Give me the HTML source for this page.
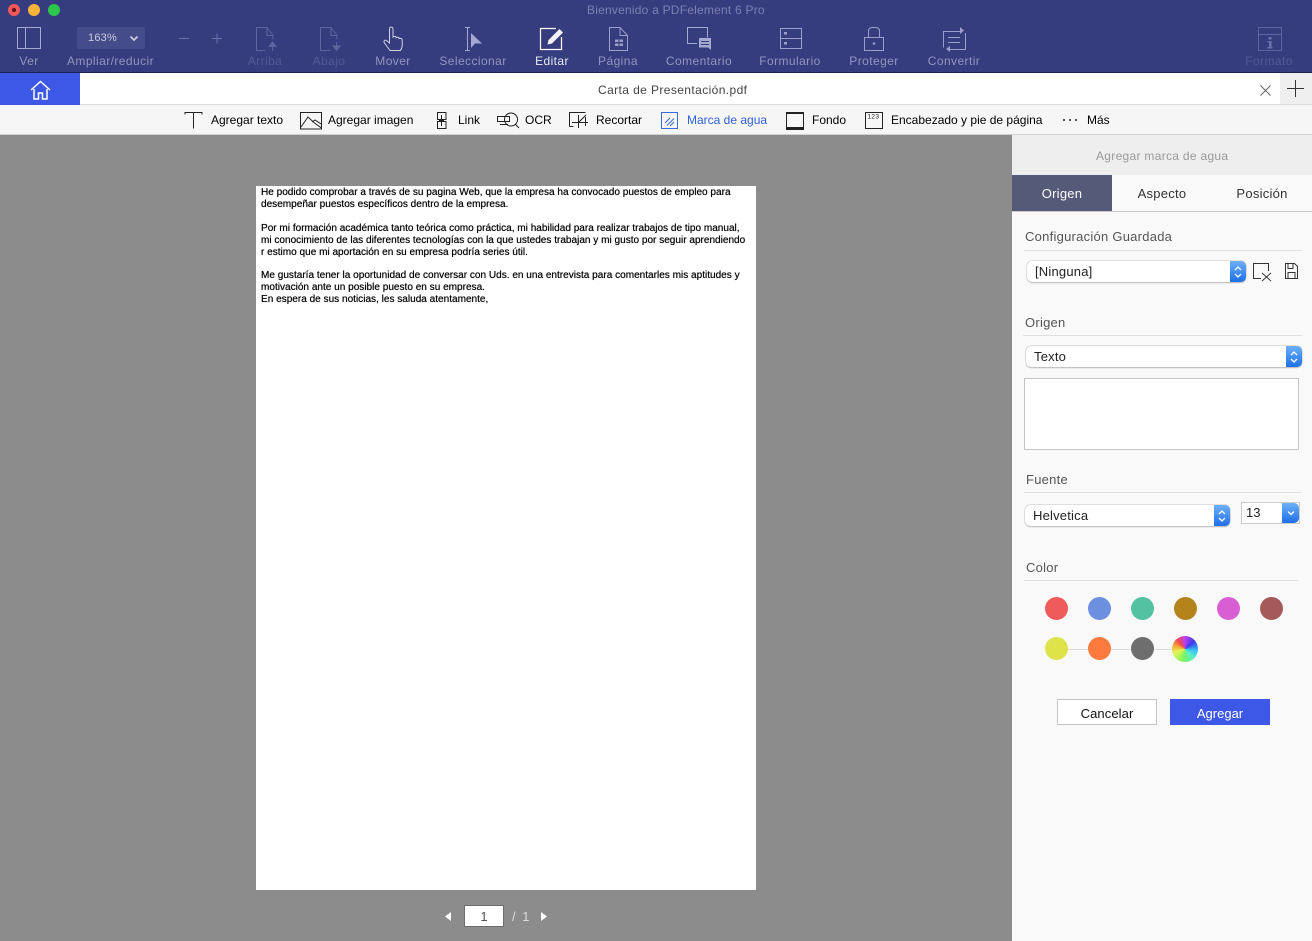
<!DOCTYPE html>
<html><head><meta charset="utf-8">
<style>
html,body{margin:0;padding:0}
body{width:1312px;height:941px;overflow:hidden;position:relative;background:#8c8c8c;font-family:"Liberation Sans",sans-serif}
.a{position:absolute}
.t{position:absolute;white-space:nowrap;line-height:14px}
.l{font-size:12px;letter-spacing:.42px;color:#9296bf;text-align:center;top:54px;transform:translateX(-50%)}
.d{color:#525a94}
.b{font-size:12px;color:#000;top:113px}
.h{font-size:13px;color:#555;letter-spacing:.25px}
.sel{position:absolute;background:#fff;border-radius:5px;box-shadow:0 0 0 .5px #c4c4c4,0 1px 1px #aaa;font-size:13px;color:#222;line-height:21px;box-sizing:border-box;padding-left:8px;height:21px;letter-spacing:.2px}
.arr{position:absolute;right:0;top:0;width:16px;height:21px;background:linear-gradient(#6cb0f8,#1f6fe8);border-radius:0 5px 5px 0}
.c{position:absolute;width:23px;height:23px;border-radius:50%}
.rule{position:absolute;height:1px;background:#e0e0e0}
svg{position:absolute;overflow:visible}
</style></head><body>
<div class="a" style="left:0;top:0;width:1312px;height:72px;background:#353d7e;border-bottom:1px solid #1c2350"></div>
<div class="c" style="left:8px;top:4px;width:12px;height:12px;background:#f2575a"></div>
<div class="c" style="left:12px;top:8px;width:4px;height:4px;background:#5a1015"></div>
<div class="c" style="left:28px;top:4px;width:12px;height:12px;background:#fbb43a"></div>
<div class="c" style="left:48px;top:4px;width:12px;height:12px;background:#2dc84a"></div>
<div class="t" style="left:587px;top:3px;font-size:12px;letter-spacing:.22px;color:#7c81b2">Bienvenido a PDFelement 6 Pro</div>

<svg style="left:0;top:0" width="1312" height="72" fill="none" stroke-width="1">
<g stroke="#a5a9d0"><rect x="17.500" y="27.500" width="23" height="21"/><path d="M25.500 27.500v21"/></g>
<path d="M179 38.500h10M212 38.500h10M217 33.500v10" stroke="#6b72a8"/>
<g stroke="#5d659f"><path d="M267 27.500h-10.500v23h9M267 27.500l6 8v4M267 27.500v8h6"/><path d="M272.500 45v6"/><path d="M269 46.500l3.500-4.500 3.500 4.500z" fill="#5d659f"/>
<path d="M331 27.500h-10.500v23h10M331 27.500l6 8v4M331 27.500v8h6"/><path d="M336.500 42v5"/><path d="M333 46l3.500 4.500 3.500-4.500z" fill="#5d659f"/></g>
<path d="M390 50.500l-5.500-7.500c-1.500-2 .5-3.500 2-2.500l3 2.500V29c0-2.500 3.500-2.500 3.500 0v8c1-1 3-1 3.200.8 1-1 3-.8 3 .8 1-.6 3-.2 3 1.400v5c0 2-.7 4-1.700 5.500z" stroke="#cfd1e6"/>
<g stroke="#a5a9d0"><path d="M465 27.500h5M465 50.500h5M467.500 27.500v23"/></g><path d="M471 33l11 10.500h-7L471 48z" fill="#a5a9d0"/>
<path d="M556 28.500H540.500v21h21V37" stroke="#fff" stroke-width="1.200"/><path d="M547.500 44.500l1-4.500 11-11 3.500 3.500-11 11z" fill="#f2f2f8"/>
<g stroke="#9a9ec8"><path d="M620 27.500h-10.500v23h18V35.500zM620 27.500v8h7.500"/></g><path d="M615 39.500h3.500v2.500H615zM619.500 39.500h3.500v2.500h-3.500zM615 43.500h3.500v2.500H615zM619.500 43.500h3.500v2.500h-3.500z" fill="#9a9ec8"/>
<path d="M697 43.500h-9.500v-16h20v10" stroke="#a5a9d0"/><path d="M699 38h12v12l-3-2.500h-9z" fill="#a5a9d0"/><path d="M701 41.500h8M701 44.500h8" stroke="#353d7e"/>
<g stroke="#9a9ec8"><rect x="780.500" y="28.500" width="21" height="20"/><path d="M780.500 38.500h21"/></g><path d="M784 32h3v2.500h-3zM784 42h3v2.500h-3z" fill="#9a9ec8"/>
<g stroke="#9a9ec8"><rect x="864.500" y="37.500" width="19" height="13"/><path d="M868.500 37v-6c0-3 2-3.500 4-3.500h3c2 0 4 .5 4 3.500v6"/></g><circle cx="874" cy="43.500" r="1.300" fill="#9a9ec8"/>
<g stroke="#9a9ec8"><path d="M960 31.500h-16.500v16M948 37.500h12M948 42.500h12M965.500 33v16.500H949"/></g><path d="M960 27l4 3.500-4 3.500zM950 46l-4 3 4 3z" fill="#9a9ec8"/>
<g stroke="#5d659f"><rect x="1258.500" y="27.500" width="23" height="23"/><path d="M1258.500 34.500h23"/></g><path d="M1268.500 37h3v2.500h-3zM1267.500 41h4v6h1v1.500h-5V47h1.500v-4.500h-1.500z" fill="#6a72aa"/>
</svg>

<div class="a" style="left:77px;top:27px;width:68px;height:22px;background:#454c8a;border-radius:2px"></div>
<div class="t" style="left:88px;top:31px;font-size:11px;letter-spacing:.2px;color:#c8cae0">163%</div>
<svg style="left:130px;top:35.500px" width="10" height="6" fill="none"><path d="M.5.500 4 4 7.500.500" stroke="#c8cae0" stroke-width="1.800"/></svg>

<div class="t l" style="left:29px">Ver</div>
<div class="t l" style="left:110.500px">Ampliar/reducir</div>
<div class="t l d" style="left:265px">Arriba</div>
<div class="t l d" style="left:329px">Abajo</div>
<div class="t l" style="left:393px">Mover</div>
<div class="t l" style="left:473px">Seleccionar</div>
<div class="t l" style="left:552px;color:#e8e9f2">Editar</div>
<div class="t l" style="left:618px">Página</div>
<div class="t l" style="left:699px">Comentario</div>
<div class="t l" style="left:790px">Formulario</div>
<div class="t l" style="left:874px">Proteger</div>
<div class="t l" style="left:954px">Convertir</div>
<div class="t l d" style="left:1269px">Formato</div>

<!-- tab bar -->
<div class="a" style="left:0;top:73px;width:1312px;height:31px;background:#fff"></div>
<div class="t" style="left:598px;top:83px;font-size:12px;letter-spacing:.4px;color:#444">Carta de Presentación.pdf</div>
<svg style="left:1260px;top:84.500px" width="11" height="11" fill="none" stroke="#666"><path d="M.5.500l10 10M10.500.500l-10 10"/></svg>
<div class="a" style="left:1280px;top:73px;width:32px;height:31px;background:#efefef"></div>
<svg style="left:1287px;top:80px" width="18" height="18" fill="none" stroke="#333"><path d="M0 8.500h17M8.500 0v17"/></svg>

<!-- sub toolbar -->
<div class="a" style="left:0;top:104px;width:1312px;height:31px;box-sizing:border-box;background:#f6f6f6;border-top:1px solid #dcdcdc;border-bottom:1px solid #d0d0d0"></div>
<div class="a" style="left:0;top:73px;width:80px;height:32px;background:#3d57e6"></div>
<svg style="left:30px;top:80px" width="21" height="20" fill="none" stroke="#fff" stroke-width="1.500"><path d="M1 10 10.500 1.500 20 10"/><path d="M4 9v10h4.500v-6h4v6H17V9"/></svg>
<svg style="left:0;top:105px" width="1312" height="30" fill="none" stroke="#222">
<path d="M185 9.500v-2h17v2M193.500 7.500v16"/>
<rect x="300.500" y="7.500" width="21" height="16.500"/><path d="M301 22l7-10 6.500 6 7 5M312 17l3-2 6 4"/>
<path d="M437.500 14.500v-7h8.500v7zM437.500 16.500h8.500v7h-8.500zM441.500 10v11M439 15.500h5"/>
<path d="M497.500 11.500h12v5h-12zM500 19.500h8"/><circle cx="511" cy="14.500" r="6.500"/><path d="M515.500 19.500l3.500 3.500"/>
<path d="M569.500 21.500v-14h16M569.500 21.500h4M578.500 10v13M572 17.500h16M586 10l-8 8M585.500 12v9"/>
<rect x="661.500" y="7.500" width="16" height="16" stroke="#3b6be0"/><path d="M665 18l5-5M667 20.500l7-7M670 21l4-4" stroke="#3b6be0"/>
<path d="M786.500 8h17v16h-17z" stroke="#222" stroke-width="1"/><path d="M786 8h18" stroke-width="2"/><path d="M786 23.500h18" stroke-width="3"/>
<rect x="865.500" y="7.500" width="17" height="16"/>
<text x="867.500" y="13.700" font-size="6.500" fill="#222" stroke="none" font-family="Liberation Sans,sans-serif" letter-spacing=".3">123</text>
<path d="M1063 15h2M1069 15h2M1075 15h2" stroke-width="1.500"/>
</svg>
<div class="t b" style="left:211px">Agregar texto</div>
<div class="t b" style="left:328px">Agregar imagen</div>
<div class="t b" style="left:458px">Link</div>
<div class="t b" style="left:525px">OCR</div>
<div class="t b" style="left:596px">Recortar</div>
<div class="t b" style="left:687px;color:#2c5fd8">Marca de agua</div>
<div class="t b" style="left:812px">Fondo</div>
<div class="t b" style="left:891px">Encabezado y pie de página</div>
<div class="t b" style="left:1087px">Más</div>

<!-- page -->
<div class="a" style="left:256px;top:186px;width:499.500px;height:704px;background:#fff"></div>
<div class="t" style="left:261px;top:187px;font-size:10.050px;line-height:11.900px;color:#000;text-shadow:0 0 .6px #333">He podido comprobar a través de su pagina Web, que la empresa ha convocado puestos de empleo para<br>desempeñar puestos específicos dentro de la empresa.<br><br>Por mi formación académica tanto teórica como práctica, mi habilidad para realizar trabajos de tipo manual,<br>mi conocimiento de las diferentes tecnologías con la que ustedes trabajan y mi gusto por seguir aprendiendo<br>r estimo que mi aportación en su empresa podría series útil.<br><br>Me gustaría tener la oportunidad de conversar con Uds. en una entrevista para comentarles mis aptitudes y<br>motivación ante un posible puesto en su empresa.<br>En espera de sus noticias, les saluda atentamente,</div>

<!-- pager -->
<svg style="left:445px;top:912px" width="6" height="10"><path d="M6 0v9L0 4.500z" fill="#fff"/></svg>
<div class="a" style="left:464px;top:905px;width:38px;height:20px;background:#fff;border:1px solid #6e6e6e;text-align:center;font-size:13px;line-height:22px;color:#555">1</div>
<div class="t" style="left:512px;top:910px;font-size:13px;letter-spacing:1.500px;color:#ddd">/ 1</div>
<svg style="left:541px;top:912px" width="6" height="10"><path d="M0 0v9l6-4.500z" fill="#fff"/></svg>

<!-- right panel -->
<div class="a" style="left:1012px;top:135px;width:300px;height:806px;background:#f9f9f9"></div>
<div class="a" style="left:1012px;top:135px;width:300px;height:40px;background:#eeeeee"></div>
<div class="t" style="left:1096px;top:149px;font-size:12px;letter-spacing:.3px;color:#999">Agregar marca de agua</div>
<div class="a" style="left:1012px;top:211px;width:300px;height:1px;background:#c8c8c8"></div>
<div class="a" style="left:1012px;top:175px;width:100px;height:36px;background:#555a78"></div>
<div class="t" style="left:1012px;width:100px;text-align:center;top:187px;font-size:13px;letter-spacing:.25px;color:#fff">Origen</div>
<div class="t" style="left:1112px;width:100px;text-align:center;top:187px;font-size:13px;letter-spacing:.25px;color:#333">Aspecto</div>
<div class="t" style="left:1212px;width:100px;text-align:center;top:187px;font-size:13px;letter-spacing:.25px;color:#333">Posición</div>

<div class="t h" style="left:1025px;top:230px">Configuración Guardada</div>
<div class="rule" style="left:1024px;top:250px;width:277px"></div>
<div class="sel" style="left:1027px;top:261px;width:219px">[Ninguna]<div class="arr"><svg style="left:4px;top:4.500px" width="8" height="12" fill="none" stroke="#fff" stroke-width="1.300"><path d="M1 4l3-3 3 3M1 8l3 3 3-3"/></svg></div></div>
<svg style="left:1253px;top:262px" width="50" height="20" fill="none" stroke="#333"><path d="M15.500 9V1.500H.500v15h7.500M9 11l9 8M18 11l-9 8"/><path d="M32.500 1.500h9l3 3v12h-12zM35 1.500v5h5v-5M35 16.500v-6h7v6"/></svg>

<div class="t h" style="left:1025px;top:316px">Origen</div>
<div class="rule" style="left:1023px;top:335px;width:279px"></div>
<div class="sel" style="left:1026px;top:346px;width:276px">Texto<div class="arr"><svg style="left:4px;top:4.500px" width="8" height="12" fill="none" stroke="#fff" stroke-width="1.300"><path d="M1 4l3-3 3 3M1 8l3 3 3-3"/></svg></div></div>
<div class="a" style="left:1024px;top:378px;width:273px;height:70px;background:#fff;border:1px solid #c4c4c4"></div>

<div class="t h" style="left:1026px;top:473px">Fuente</div>
<div class="rule" style="left:1024px;top:492px;width:278px"></div>
<div class="sel" style="left:1025px;top:505px;width:205px">Helvetica<div class="arr"><svg style="left:4px;top:4.500px" width="8" height="12" fill="none" stroke="#fff" stroke-width="1.300"><path d="M1 4l3-3 3 3M1 8l3 3 3-3"/></svg></div></div>
<div class="a" style="left:1242px;top:503px;width:57px;height:20px;background:#fff;box-shadow:0 0 0 1px #ccc;font-size:13px;line-height:20px;color:#222;padding-left:4px;box-sizing:border-box">13<div class="arr" style="width:17px;height:20px"><svg style="left:5px;top:8px" width="8" height="5" fill="none" stroke="#fff" stroke-width="1.300"><path d="M1 .500l3 3 3-3"/></svg></div></div>

<div class="t h" style="left:1026px;top:561px">Color</div>
<div class="rule" style="left:1024px;top:580px;width:275px"></div>
<div class="c" style="left:1044.500px;top:597px;background:#ef5a5a"></div>
<div class="c" style="left:1087.500px;top:597px;background:#6c8fe0"></div>
<div class="c" style="left:1130.500px;top:597px;background:#52c2a0"></div>
<div class="c" style="left:1173.500px;top:597px;background:#b5831b"></div>
<div class="c" style="left:1216.500px;top:597px;background:#d85fd3"></div>
<div class="c" style="left:1259.500px;top:597px;background:#a55a5a"></div>
<div class="a" style="left:1056px;top:649px;width:120px;height:1px;background:#ddd"></div>
<div class="c" style="left:1044.500px;top:637px;background:#dfe34a"></div>
<div class="c" style="left:1087.500px;top:637px;background:#ff7a3d"></div>
<div class="c" style="left:1130.500px;top:637px;background:#6e6e6e"></div>
<div class="c" style="left:1172px;top:636px;width:26px;height:26px;background:conic-gradient(#c040f0 0deg,#3a3cf0 50deg,#38c6f5 100deg,#5cf0c0 140deg,#7cf55a 190deg,#e6f55a 250deg,#f5a53a 290deg,#f04a4a 320deg,#c040f0 360deg)"></div>

<div class="a" style="left:1057px;top:699px;width:98px;height:24px;background:#fff;border:1px solid #c4c4c4;text-align:center;font-size:13px;line-height:27px;color:#111;letter-spacing:.1px">Cancelar</div>
<div class="a" style="left:1170px;top:699px;width:100px;height:26px;background:#3d57e6;text-align:center;font-size:13px;line-height:29px;color:#fff">Agregar</div>
</body></html>
